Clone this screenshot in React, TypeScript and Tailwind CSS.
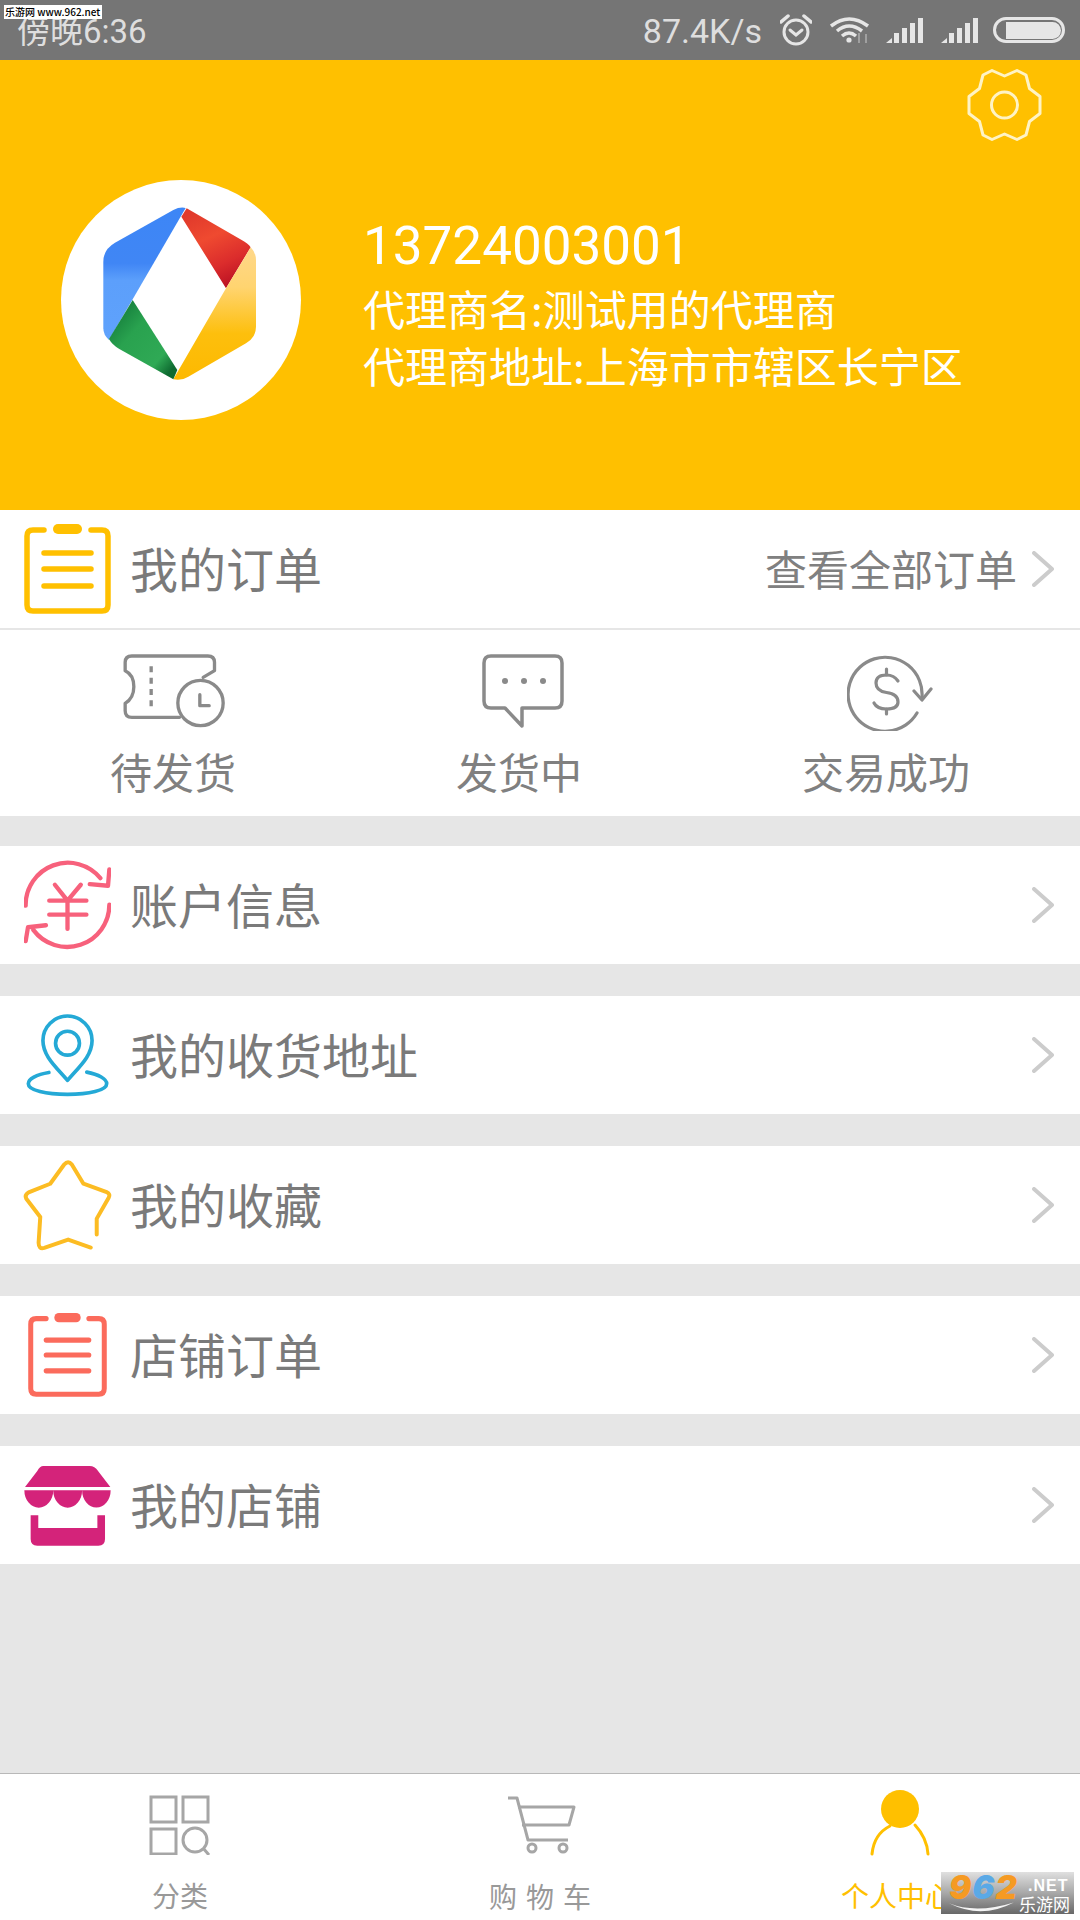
import React from "react";

type IconProps = { className?: string };

const cjk = "font-['Noto_Sans_CJK_SC',sans-serif]";

function SignalIcon() {
    return (
        <svg viewBox="0 0 37 25" className="w-[37px] h-[25px]" fill="#e6e6e6">
            <path d="M0 25 L6 20 V25 Z" />
            <rect x="8" y="15" width="5" height="10" />
            <rect x="16" y="10" width="5" height="15" />
            <rect x="24" y="5" width="5" height="20" />
            <rect x="32" y="0" width="5" height="25" />
        </svg>
    );
}

function StatusBar() {
    return (
        <div className="h-[60px] bg-[#757575] flex items-center justify-between pl-[17px] pr-[15px] text-[#dedede] font-['Roboto','Noto_Sans_CJK_SC',sans-serif]">
            <span className="text-[33px] leading-none pt-[2px]">傍晚6:36</span>
            <div className="flex items-center">
                <span className="text-[34px] leading-none pt-[2px]">87.4K/s</span>
                <svg viewBox="0 0 32 32" className="w-[32px] h-[32px] ml-[18px]" fill="none" stroke="#e6e6e6" strokeWidth="3" strokeLinecap="round">
                    <circle cx="16" cy="18" r="12" />
                    <path d="M10 16 L16 21 L22 16" />
                    <path d="M1 8 L8 2" strokeWidth="3.5" />
                    <path d="M31 8 L24 2" strokeWidth="3.5" />
                </svg>
                <svg viewBox="0 0 40 26" className="w-[40px] h-[26px] ml-[18px]" fill="none" stroke="#e6e6e6" strokeWidth="3.5">
                    <path d="M1 9 Q19 -5 38 9" />
                    <path d="M7 14 Q19 4 32 14" />
                    <path d="M12 19 Q19 13 26 19" />
                    <circle cx="19" cy="23" r="2.6" fill="#e6e6e6" stroke="none" />
                    <path d="M29 16 V26" stroke="#a0a0a0" strokeWidth="2" />
                    <path d="M36 17 V26" stroke="#a0a0a0" strokeWidth="2" />
                </svg>
                <div className="ml-[16px]">
                    <SignalIcon />
                </div>
                <div className="ml-[18px]">
                    <SignalIcon />
                </div>
                <div className="ml-[15px] w-[72px] h-[26px] rounded-full border-[3px] border-[#e6e6e6] flex items-center pl-[10px] pr-[1px]">
                    <div className="w-full h-[17px] bg-[#e6e6e6] rounded-r-full" />
                </div>
            </div>
        </div>
    );
}

function LogoMark() {
    return (
        <svg viewBox="63 60 720 720" className="w-[240px] h-[240px]">
            <defs>
                <linearGradient id="blue" x1="0" y1="0" x2="0" y2="1">
                    <stop offset="0" stopColor="#3d86f6" />
                    <stop offset="0.42" stopColor="#4086f5" />
                    <stop offset="0.55" stopColor="#5c9ffb" />
                    <stop offset="1" stopColor="#5fa2fc" />
                </linearGradient>
                <linearGradient id="red" x1="0.3" y1="0" x2="0.7" y2="1">
                    <stop offset="0" stopColor="#e0392b" />
                    <stop offset="0.35" stopColor="#ef4a30" />
                    <stop offset="0.7" stopColor="#db2c2c" />
                    <stop offset="1" stopColor="#b80f22" />
                </linearGradient>
                <linearGradient id="yellow" x1="0" y1="0" x2="0" y2="1">
                    <stop offset="0" stopColor="#ffd88a" />
                    <stop offset="0.3" stopColor="#ffd470" />
                    <stop offset="0.65" stopColor="#fdbf0d" />
                    <stop offset="1" stopColor="#fdb900" />
                </linearGradient>
                <linearGradient id="green" x1="0.1" y1="0.1" x2="0.9" y2="0.9">
                    <stop offset="0" stopColor="#137a3a" />
                    <stop offset="0.35" stopColor="#29a24f" />
                    <stop offset="0.8" stopColor="#2fa955" />
                    <stop offset="1" stopColor="#0e6a30" />
                </linearGradient>
            </defs>
            <path fill="url(#blue)" d="M437 144 Q420 140 400 150 L225 248 Q190 268 190 305 L190 505 Q190 525 207 540 L278 418 Z" />
            <path fill="url(#red)" d="M424 170 L440 145 L605 240 Q624 250 632 262 L558 385 Z" />
            <path fill="url(#yellow)" d="M632 262 Q648 278 648 300 L648 500 Q648 532 618 550 L445 650 Q425 663 400 658 L558 385 Z" />
            <path fill="url(#green)" d="M278 420 L412 630 L400 658 L238 567 Q216 554 207 537 Z" />
        </svg>
    );
}

function GearIcon() {
    return (
        <svg viewBox="0 0 75 72" className="w-[75px] h-[72px]" fill="none" stroke="#fff3c4" strokeWidth="3" strokeLinejoin="round">
            <path d="M37.5 7 L25 1.5 L16 6 L12.5 19.5 L2 27.5 V44.5 L12.5 52.5 L16 66 L25 70.5 L37.5 65 L50 70.5 L59 66 L62.5 52.5 L73 44.5 V27.5 L62.5 19.5 L59 6 L50 1.5 Z" />
            <circle cx="37.5" cy="36" r="13" />
        </svg>
    );
}

function Header() {
    return (
        <div className="h-[450px] bg-[#ffc000]">
            <div className="flex justify-end pt-[9px] pr-[38px]">
                <GearIcon />
            </div>
            <div className="flex items-start pl-[61px] mt-[39px]">
                <div className="w-[240px] h-[240px] rounded-full bg-white shrink-0">
                    <LogoMark />
                </div>
                <div className={`ml-[62px] mt-[33px] text-white ${cjk}`}>
                    <div className="text-[53px] leading-[66px] font-['Roboto']">13724003001</div>
                    <div className="text-[42px] leading-[57px]">代理商名:测试用的代理商</div>
                    <div className="text-[42px] leading-[57px]">代理商地址:上海市市辖区长宁区</div>
                </div>
            </div>
        </div>
    );
}

function ClipboardIcon({ className }: IconProps) {
    return (
        <svg viewBox="0 0 87 90" preserveAspectRatio="none" className={className} fill="none" stroke="currentColor" strokeWidth="5.5" strokeLinecap="round">
            <path d="M20 6 H9 Q3 6 3 12 V81 Q3 87 9 87 H78 Q84 87 84 81 V12 Q84 6 78 6 H67" />
            <rect x="29" y="0" width="29" height="10" rx="5" fill="currentColor" stroke="none" />
            <path d="M20 29 H67 M20 45 H67 M20 62 H67" />
        </svg>
    );
}

function YuanIcon() {
    return (
        <svg viewBox="72 58 262 270" className="w-[87px] h-[90px]" fill="none" stroke="#f7617c" strokeWidth="13" strokeLinecap="round" strokeLinejoin="round">
            <path d="M77 195 A127 127 0 0 1 302 112" />
            <path d="M329 86 L325 135 L270 130" />
            <path d="M329 192 A127 127 0 0 1 100 268" />
            <path d="M138 254 L84 260 L77 302" />
            <path d="M165 132 L203 180 L243 132 M148 180 H260 M148 222 H260 M203 180 V265" />
        </svg>
    );
}

function PinIcon() {
    return (
        <svg viewBox="80 518 248 250" className="w-[83px] h-[83px]" fill="none" stroke="#24a9d6" strokeWidth="11" strokeLinecap="round" strokeLinejoin="round">
            <path d="M204 718 C170 678 130 645 130 598 A74 74 0 0 1 278 598 C278 645 238 678 204 718 Z" />
            <circle cx="204" cy="606" r="36" />
            <path d="M148 694 C110 700 86 714 86 728 C86 748 140 760 204 760 C268 760 322 748 322 728 C322 714 298 700 262 693" />
        </svg>
    );
}

function StarIcon() {
    return (
        <svg viewBox="68 956 268 276" className="w-[89px] h-[92px]" fill="none" stroke="#fcbc23" strokeWidth="12" strokeLinecap="round" strokeLinejoin="round">
            <path d="M290 1183 L290 1135 L326 1072 Q332 1060 320 1055 L250 1030 L215 972 Q204 958 192 972 L150 1030 L85 1056 Q72 1064 78 1075 L120 1130 L115 1208 Q115 1228 132 1223 L204 1198 L272 1222" />
        </svg>
    );
}

function StoreIcon() {
    return (
        <svg viewBox="72 552 262 244" className="w-[87px] h-[81px]" fill="#d4237a">
            <path d="M130 555 H270 Q285 555 295 570 L332 618 H75 L112 570 Q120 555 130 555 Z" />
            <path d="M73 628 H333 A43 52 0 0 1 247 628 A43 52 0 0 1 160 628 A43 52 0 0 1 73 628 Z" />
            <path d="M92 703 H115 V742 H293 V703 H316 V775 Q316 795 296 795 H112 Q92 795 92 775 Z" />
        </svg>
    );
}

function Chevron() {
    return (
        <svg viewBox="0 0 22 36" className="w-[22px] h-[36px]" fill="none" stroke="#cccccc" strokeWidth="4" strokeLinecap="round" strokeLinejoin="round">
            <path d="M2 2 L20 18 L2 34" />
        </svg>
    );
}

function MenuRow({ icon, label }: { icon: React.ReactNode; label: string }) {
    return (
        <div className="h-[118px] bg-white flex items-center pr-[26px]">
            <div className="w-[130px] shrink-0 flex justify-center pl-[4px]">{icon}</div>
            <span className={`flex-1 text-[48px] leading-none pb-[4px] text-[#7a7a7a] ${cjk}`}>{label}</span>
            <Chevron />
        </div>
    );
}

function TicketIcon() {
    return (
        <svg viewBox="355 460 310 225" className="w-[107px] h-[75px]" fill="none" stroke="#8a8a8a" strokeWidth="10" strokeLinecap="round" strokeLinejoin="round">
            <path d="M525 650 H382 Q362 650 362 630 V608 Q388 592 388 558 Q388 522 362 510 V485 Q362 466 382 466 H610 Q630 466 630 485 V510 L596 530" />
            <path d="M440 497 V622" strokeDasharray="18 16" strokeLinecap="butt" />
            <circle cx="588" cy="607" r="68" />
            <path d="M586 582 V615 H614" />
        </svg>
    );
}

function BubbleIcon() {
    return (
        <svg viewBox="0 0 84 77" className="w-[84px] h-[77px]" fill="none" stroke="#8a8a8a" strokeWidth="3.5" strokeLinejoin="round">
            <path d="M10 3 H74 Q81 3 81 10 V48 Q81 55 74 55 H41 V73 L24 55 H10 Q3 55 3 48 V10 Q3 3 10 3 Z" />
            <circle cx="24" cy="28" r="3" fill="#8a8a8a" stroke="none" />
            <circle cx="43" cy="28" r="3" fill="#8a8a8a" stroke="none" />
            <circle cx="62" cy="28" r="3" fill="#8a8a8a" stroke="none" />
        </svg>
    );
}

function DollarIcon() {
    return (
        <svg viewBox="0 0 86 78" className="w-[86px] h-[78px]" fill="none" stroke="#8a8a8a" strokeWidth="3.2" strokeLinecap="round" strokeLinejoin="round">
            <path d="M70 60 A37 37 0 1 1 75 44" />
            <path d="M67 38 L75 47 L84 36" />
            <path d="M51 28 Q47 22 39.5 22 Q29 22 29 30 Q29 38 39.5 39.5 Q51 41 51 49 Q51 56 39.5 56 Q30 56 27 50" />
            <path d="M39.5 16 V22 M39.5 56 V61" />
        </svg>
    );
}

function OrderCard() {
    return (
        <div className="bg-white">
            <div className="h-[118px] flex items-center pr-[26px]">
                <div className="w-[130px] shrink-0 flex justify-center pl-[4px]">
                    <ClipboardIcon className="w-[87px] h-[90px] text-[#ffc000]" />
                </div>
                <span className={`flex-1 text-[48px] leading-none pb-[4px] text-[#7a7a7a] ${cjk}`}>我的订单</span>
                <span className={`text-[42px] leading-none pb-[2px] text-[#808080] mr-[15px] ${cjk}`}>查看全部订单</span>
                <Chevron />
            </div>
            <div className="h-[2px] bg-[#e6e6e6]" />
            <div className={`h-[186px] grid grid-cols-[346px_346px_388px] text-[42px] leading-none text-[#808080] ${cjk}`}>
                <div className="flex flex-col items-center pt-[23px]">
                    <div className="h-[77px] flex items-center ml-[3px]">
                        <TicketIcon />
                    </div>
                    <span className="mt-[20px]">待发货</span>
                </div>
                <div className="flex flex-col items-center pt-[23px]">
                    <div className="h-[77px] flex items-center ml-[7px]">
                        <BubbleIcon />
                    </div>
                    <span className="mt-[20px]">发货中</span>
                </div>
                <div className="flex flex-col items-center pt-[23px]">
                    <div className="h-[77px] flex items-center ml-[7px]">
                        <DollarIcon />
                    </div>
                    <span className="mt-[20px]">交易成功</span>
                </div>
            </div>
        </div>
    );
}

function TabBar() {
    return (
        <div className={`h-[147px] bg-white border-t border-[#b8b8b8] grid grid-cols-3 text-[28px] leading-none ${cjk}`}>
            <div className="flex flex-col items-center pt-[21px] text-[#999999]">
                <svg viewBox="0 0 62 60" className="w-[62px] h-[60px]" fill="none" stroke="#a6a6a6" strokeWidth="3">
                    <rect x="2" y="2" width="25" height="25" />
                    <rect x="34" y="2" width="25" height="25" />
                    <rect x="2" y="34" width="25" height="25" />
                    <circle cx="46" cy="45" r="12" />
                    <path d="M54 53 L60 60" />
                </svg>
                <span className="mt-[26px]">分类</span>
            </div>
            <div className="flex flex-col items-center pt-[21px] text-[#999999]">
                <svg viewBox="0 0 68 60" className="w-[68px] h-[60px] ml-[3px]" fill="none" stroke="#a6a6a6" strokeWidth="3" strokeLinejoin="round">
                    <path d="M0 3 H9 L20 45 H60" />
                    <path d="M10 12 H66 L61 30 H14" />
                    <circle cx="24" cy="53" r="4" />
                    <circle cx="55" cy="53" r="4" />
                </svg>
                <span className="mt-[27px] tracking-[9px] ml-[9px]">购物车</span>
            </div>
            <div className="flex flex-col items-center pt-[16px] text-[#ffc000]">
                <svg viewBox="0 0 60 66" className="w-[60px] h-[66px]" fill="none" stroke="#ffc000" strokeWidth="3" strokeLinecap="round">
                    <circle cx="30" cy="19" r="19" fill="#ffc000" stroke="none" />
                    <path d="M2 64 Q4 44 20 36" />
                    <path d="M58 64 Q57 48 45 35" />
                </svg>
                <span className="mt-[25px] mr-[6px]">个人中心</span>
            </div>
        </div>
    );
}

export default function App() {
    return (
        <div className="relative w-[1080px] h-[1920px] bg-[#e6e6e6] flex flex-col overflow-hidden">
            <StatusBar />
            <Header />
            <OrderCard />
            <div className="flex flex-col gap-[32px] mt-[30px] flex-1">
                <MenuRow icon={<YuanIcon />} label="账户信息" />
                <MenuRow icon={<PinIcon />} label="我的收货地址" />
                <MenuRow icon={<StarIcon />} label="我的收藏" />
                <MenuRow icon={<ClipboardIcon className="w-[79px] h-[84px] text-[#fb6b5c]" />} label="店铺订单" />
                <MenuRow icon={<StoreIcon />} label="我的店铺" />
            </div>
            <TabBar />

            {/* site watermarks burnt into the screenshot */}
            <div className={`absolute left-[4px] top-[5px] h-[14px] w-[98px] bg-white text-black text-[10px] leading-[14px] font-medium whitespace-nowrap pl-[1px] ${cjk}`}>
                乐游网 www.962.net
            </div>
            <div className="absolute left-[941px] top-[1872px] w-[133px] h-[42px] bg-gradient-to-b from-[#e0e0e0] via-[#a8a8a8] to-[#686868] font-['Liberation_Sans',sans-serif]">
                <div className="absolute left-[8px] top-0 text-[33px] leading-[30px] font-['Inter'] font-black italic tracking-[1px] whitespace-nowrap">
                    <span className="text-[#f59a23]">9</span>
                    <span className="text-[#5aa9e6]">6</span>
                    <span className="text-[#f59a23]">2</span>
                </div>
                <svg viewBox="0 0 80 14" className="absolute left-[8px] top-[27px] w-[72px] h-[14px]" fill="#f4f4f4">
                    <path d="M0 4 Q30 16 72 3 Q36 22 0 4 Z" />
                </svg>
                <div className="absolute left-[87px] top-[5px] text-[16px] leading-[18px] font-bold text-white tracking-[1px] whitespace-nowrap">.NET</div>
                <div className={`absolute left-[78px] top-[23px] text-[17px] leading-[18px] text-white whitespace-nowrap ${cjk}`}>乐游网</div>
            </div>
        </div>
    );
}
